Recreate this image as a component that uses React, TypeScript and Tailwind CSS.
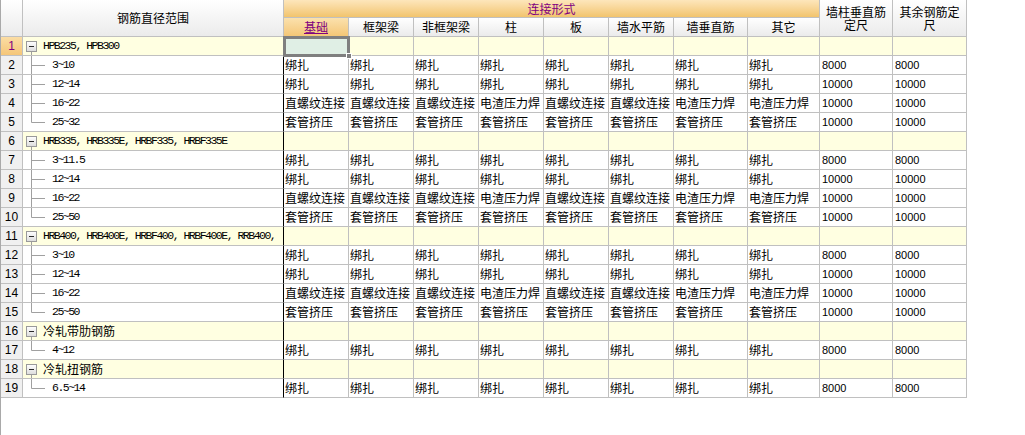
import React from "react";

const CJK = "font-['Noto_Sans_CJK_SC',sans-serif] text-[12px]";
const MONO = "font-['Liberation_Mono','Noto_Sans_CJK_SC',monospace] text-[11.5px] tracking-[-1.5px]";
const NUM = "font-['Liberation_Sans',sans-serif] text-[11px]";

// widths include the 1px right border
const colWidths = ["w-[65px]", "w-[65px]", "w-[65px]", "w-[65px]", "w-[65px]", "w-[65px]", "w-[74px]", "w-[72px]", "w-[73px]", "w-[74px]"];
const connHeaders = ["基础", "框架梁", "非框架梁", "柱", "板", "墙水平筋", "墙垂直筋", "其它"];

const BIND = ["绑扎", "绑扎", "绑扎", "绑扎", "绑扎", "绑扎", "绑扎", "绑扎"];
const SCREW = ["直螺纹连接", "直螺纹连接", "直螺纹连接", "电渣压力焊", "直螺纹连接", "直螺纹连接", "电渣压力焊", "电渣压力焊"];
const SLEEVE = ["套管挤压", "套管挤压", "套管挤压", "套管挤压", "套管挤压", "套管挤压", "套管挤压", "套管挤压"];

type Child = { range: string; conn: string[]; a: string; b: string };
type Group = { label: string; mono: boolean; children: Child[] };

const groups: Group[] = [
  {
    label: "HPB235, HPB300",
    mono: true,
    children: [
      { range: "3~10", conn: BIND, a: "8000", b: "8000" },
      { range: "12~14", conn: BIND, a: "10000", b: "10000" },
      { range: "16~22", conn: SCREW, a: "10000", b: "10000" },
      { range: "25~32", conn: SLEEVE, a: "10000", b: "10000" },
    ],
  },
  {
    label: "HRB335, HRB335E, HRBF335, HRBF335E",
    mono: true,
    children: [
      { range: "3~11.5", conn: BIND, a: "8000", b: "8000" },
      { range: "12~14", conn: BIND, a: "10000", b: "10000" },
      { range: "16~22", conn: SCREW, a: "10000", b: "10000" },
      { range: "25~50", conn: SLEEVE, a: "10000", b: "10000" },
    ],
  },
  {
    label: "HRB400, HRB400E, HRBF400, HRBF400E, RRB400,",
    mono: true,
    children: [
      { range: "3~10", conn: BIND, a: "8000", b: "8000" },
      { range: "12~14", conn: BIND, a: "10000", b: "10000" },
      { range: "16~22", conn: SCREW, a: "10000", b: "10000" },
      { range: "25~50", conn: SLEEVE, a: "10000", b: "10000" },
    ],
  },
  { label: "冷轧带肋钢筋", mono: false, children: [{ range: "4~12", conn: BIND, a: "8000", b: "8000" }] },
  { label: "冷轧扭钢筋", mono: false, children: [{ range: "6.5~14", conn: BIND, a: "8000", b: "8000" }] },
];

function GroupBox() {
  return (
    <svg width="20" height="18" className="shrink-0">
      <line x1="8.5" y1="15" x2="8.5" y2="18" stroke="#a0a0a0" />
      <defs>
        <linearGradient id="bx" x1="0" y1="0" x2="0" y2="1">
          <stop offset="0" stopColor="#ffffff" />
          <stop offset="1" stopColor="#dcdcdc" />
        </linearGradient>
      </defs>
      <rect x="3.5" y="4.5" width="10" height="10" fill="url(#bx)" stroke="#9a9a9a" />
      <line x1="6" y1="9.5" x2="11" y2="9.5" stroke="#2a2a2a" />
    </svg>
  );
}

function Branch({ last }: { last: boolean }) {
  return (
    <svg width="29" height="18" className="shrink-0">
      <line x1="8.5" y1="0" x2="8.5" y2={last ? 9.5 : 18} stroke="#a0a0a0" />
      <line x1="8.5" y1="9.5" x2="22" y2="9.5" stroke="#a0a0a0" />
    </svg>
  );
}

function RowNum({ n, active }: { n: number; active?: boolean }) {
  return (
    <div
      className={`w-[22px] h-full shrink-0 border-r border-b border-[#c0c0c0] flex items-center justify-center font-['Liberation_Sans',sans-serif] text-[12px] ${
        active ? "bg-linear-to-b from-[#fbdda4] to-[#f5c678] text-[#800080]" : "bg-[#f0f0f0] text-black"
      }`}
    >
      {n}
    </div>
  );
}

export default function App() {
  let n = 0;
  const rows: React.ReactNode[] = [];

  groups.forEach((g) => {
    n += 1;
    const num = n;
    rows.push(
      <div key={`g${num}`} className="flex h-[19px]">
        <RowNum n={num} active={num === 1} />
        <div className="w-[261px] shrink-0 h-full border-r border-b border-r-black border-b-[#c0c0c0] bg-[#ffffe1] flex items-center overflow-hidden">
          <GroupBox />
          <span className={`${g.mono ? MONO : CJK} whitespace-nowrap leading-[18px] text-black`}>{g.label}</span>
        </div>
        {colWidths.map((w, i) => (
          <div key={i} className={`${w} shrink-0 h-full border-r border-b border-[#c0c0c0] bg-[#ffffe1] relative`}>
            {num === 1 && i === 0 && (
              <div className="absolute left-[-1px] top-[-1px] w-[67px] h-[21px] border-[3px] border-[#7f7f7f] bg-[#e0efe5] z-10">
                <div className="absolute right-[-5px] bottom-[-5px] w-[6px] h-[6px] bg-[#7f7f7f] border border-white" />
              </div>
            )}
          </div>
        ))}
      </div>
    );
    g.children.forEach((c, ci) => {
      n += 1;
      const last = ci === g.children.length - 1;
      rows.push(
        <div key={`c${n}`} className="flex h-[19px]">
          <RowNum n={n} />
          <div className="w-[261px] shrink-0 h-full border-r border-b border-r-black border-b-[#c0c0c0] bg-white flex items-center overflow-hidden">
            <Branch last={last} />
            <span className={`${MONO} whitespace-nowrap leading-[18px] text-black`}>{c.range}</span>
          </div>
          {c.conn.map((t, i) => (
            <div key={i} className={`${colWidths[i]} shrink-0 h-full border-r border-b border-[#c0c0c0] bg-white pl-px ${CJK} leading-[18px] whitespace-nowrap overflow-hidden text-black`}>
              {t}
            </div>
          ))}
          <div className={`${colWidths[8]} shrink-0 h-full border-r border-b border-[#c0c0c0] bg-white pl-[2px] ${NUM} leading-[18px] text-black`}>{c.a}</div>
          <div className={`${colWidths[9]} shrink-0 h-full border-r border-b border-[#c0c0c0] bg-white pl-[2px] ${NUM} leading-[18px] text-black`}>{c.b}</div>
        </div>
      );
    });
  });

  const headCell = "bg-linear-to-b from-white to-[#ebebeb] border-r border-b border-[#c0c0c0]";

  return (
    <div className="h-screen w-full bg-white border-l border-[#a9a9a9] overflow-hidden">
      {/* Header */}
      <div className="flex h-[37px]">
        <div className={`w-[22px] h-full shrink-0 ${headCell}`} />
        <div className={`w-[261px] h-full shrink-0 ${headCell} flex items-center justify-center ${CJK} text-black`}>
          钢筋直径范围
        </div>
        <div className="w-[536px] h-full shrink-0 flex flex-col">
          <div className="h-[18px] border-r border-b border-[#c0c0c0] bg-linear-to-b from-[#fde6bb] to-[#f2c46c] flex items-center justify-center">
            <span className={`${CJK} leading-[16px] text-[#800080]`}>连接形式</span>
          </div>
          <div className="h-[19px] flex">
            {connHeaders.map((h, i) => (
              <div
                key={h}
                className={`${colWidths[i]} h-full shrink-0 border-r border-b border-[#c0c0c0] flex items-center justify-center ${CJK} leading-[16px] ${
                  i === 0 ? "bg-linear-to-b from-[#fbe1ad] to-[#f4c676] text-[#800080] underline" : "bg-linear-to-b from-white to-[#ebebeb] text-black"
                }`}
              >
                {h}
              </div>
            ))}
          </div>
        </div>
        <div className={`w-[73px] h-full shrink-0 ${headCell} flex flex-col items-center justify-center text-center ${CJK} leading-[13px] text-black`}>
          <span>墙柱垂直筋</span>
          <span>定尺</span>
        </div>
        <div className={`w-[74px] h-full shrink-0 ${headCell} flex flex-col items-center justify-center text-center ${CJK} leading-[13px] text-black`}>
          <span>其余钢筋定</span>
          <span>尺</span>
        </div>
      </div>
      {rows}
    </div>
  );
}
